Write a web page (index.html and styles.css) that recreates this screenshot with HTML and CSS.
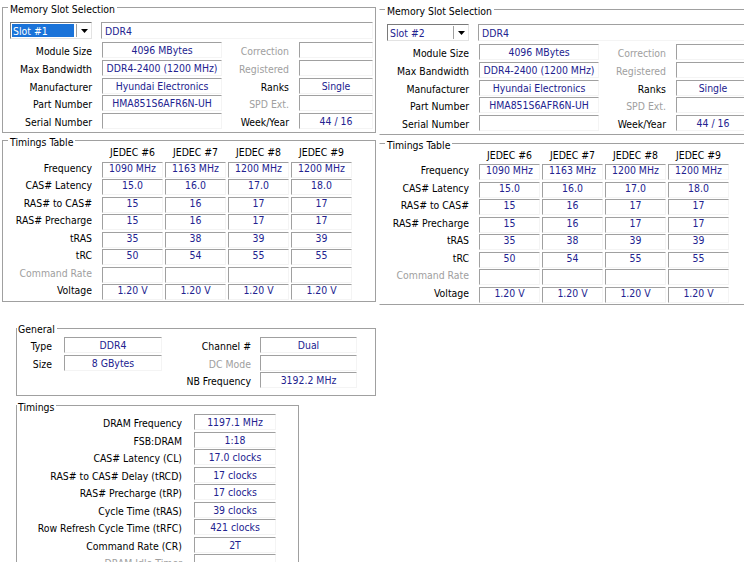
FILE: index.html
```html
<!DOCTYPE html>
<html lang="en">
<head>
    <meta charset="UTF-8">
    <title>CPU-Z SPD / Memory</title>
    <link rel="stylesheet" href="styles.css">
</head>
<body>
    <div class="top">
        <!-- SPD tab, slot 1 -->
        <div class="spd">
            <fieldset class="group">
                <legend>Memory Slot Selection</legend>
                <div class="slot-body">
                    <div class="slot-row">
                        <div class="combo active">
                            <span class="combo-text">Slot #1</span>
                            <span class="combo-btn"><svg width="7" height="4" viewBox="0 0 7 4"><polygon points="0,0 7,0 3.5,4" fill="#000"/></svg></span>
                        </div>
                        <div class="field type-field">DDR4</div>
                    </div>
                    <div class="info-grid">
                        <span class="lbl">Module Size</span><span class="field">4096 MBytes</span><span class="lbl off">Correction</span><span class="field"></span>
                        <span class="lbl">Max Bandwidth</span><span class="field">DDR4-2400 (1200 MHz)</span><span class="lbl off">Registered</span><span class="field"></span>
                        <span class="lbl">Manufacturer</span><span class="field">Hyundai Electronics</span><span class="lbl">Ranks</span><span class="field">Single</span>
                        <span class="lbl">Part Number</span><span class="field">HMA851S6AFR6N-UH</span><span class="lbl off">SPD Ext.</span><span class="field"></span>
                        <span class="lbl">Serial Number</span><span class="field"></span><span class="lbl">Week/Year</span><span class="field">44 / 16</span>
                    </div>
                </div>
            </fieldset>
            <fieldset class="group timings-table">
                <legend>Timings Table</legend>
                <div class="tt-body">
                    <div class="tt-grid">
                        <span></span><span class="col-head">JEDEC #6</span><span class="col-head">JEDEC #7</span><span class="col-head">JEDEC #8</span><span class="col-head">JEDEC #9</span>
                        <span class="lbl">Frequency</span><span class="field">1090 MHz</span><span class="field">1163 MHz</span><span class="field">1200 MHz</span><span class="field">1200 MHz</span>
                        <span class="lbl">CAS# Latency</span><span class="field">15.0</span><span class="field">16.0</span><span class="field">17.0</span><span class="field">18.0</span>
                        <span class="lbl">RAS# to CAS#</span><span class="field">15</span><span class="field">16</span><span class="field">17</span><span class="field">17</span>
                        <span class="lbl">RAS# Precharge</span><span class="field">15</span><span class="field">16</span><span class="field">17</span><span class="field">17</span>
                        <span class="lbl">tRAS</span><span class="field">35</span><span class="field">38</span><span class="field">39</span><span class="field">39</span>
                        <span class="lbl">tRC</span><span class="field">50</span><span class="field">54</span><span class="field">55</span><span class="field">55</span>
                        <span class="lbl off">Command Rate</span><span class="field"></span><span class="field"></span><span class="field"></span><span class="field"></span>
                        <span class="lbl">Voltage</span><span class="field">1.20 V</span><span class="field">1.20 V</span><span class="field">1.20 V</span><span class="field">1.20 V</span>
                    </div>
                </div>
            </fieldset>
        </div>

        <!-- SPD tab, slot 2 -->
        <div class="spd spd-second">
            <fieldset class="group">
                <legend>Memory Slot Selection</legend>
                <div class="slot-body">
                    <div class="slot-row">
                        <div class="combo">
                            <span class="combo-text">Slot #2</span>
                            <span class="combo-btn"><svg width="7" height="4" viewBox="0 0 7 4"><polygon points="0,0 7,0 3.5,4" fill="#000"/></svg></span>
                        </div>
                        <div class="field type-field">DDR4</div>
                    </div>
                    <div class="info-grid">
                        <span class="lbl">Module Size</span><span class="field">4096 MBytes</span><span class="lbl off">Correction</span><span class="field"></span>
                        <span class="lbl">Max Bandwidth</span><span class="field">DDR4-2400 (1200 MHz)</span><span class="lbl off">Registered</span><span class="field"></span>
                        <span class="lbl">Manufacturer</span><span class="field">Hyundai Electronics</span><span class="lbl">Ranks</span><span class="field">Single</span>
                        <span class="lbl">Part Number</span><span class="field">HMA851S6AFR6N-UH</span><span class="lbl off">SPD Ext.</span><span class="field"></span>
                        <span class="lbl">Serial Number</span><span class="field"></span><span class="lbl">Week/Year</span><span class="field">44 / 16</span>
                    </div>
                </div>
            </fieldset>
            <fieldset class="group timings-table">
                <legend>Timings Table</legend>
                <div class="tt-body">
                    <div class="tt-grid">
                        <span></span><span class="col-head">JEDEC #6</span><span class="col-head">JEDEC #7</span><span class="col-head">JEDEC #8</span><span class="col-head">JEDEC #9</span>
                        <span class="lbl">Frequency</span><span class="field">1090 MHz</span><span class="field">1163 MHz</span><span class="field">1200 MHz</span><span class="field">1200 MHz</span>
                        <span class="lbl">CAS# Latency</span><span class="field">15.0</span><span class="field">16.0</span><span class="field">17.0</span><span class="field">18.0</span>
                        <span class="lbl">RAS# to CAS#</span><span class="field">15</span><span class="field">16</span><span class="field">17</span><span class="field">17</span>
                        <span class="lbl">RAS# Precharge</span><span class="field">15</span><span class="field">16</span><span class="field">17</span><span class="field">17</span>
                        <span class="lbl">tRAS</span><span class="field">35</span><span class="field">38</span><span class="field">39</span><span class="field">39</span>
                        <span class="lbl">tRC</span><span class="field">50</span><span class="field">54</span><span class="field">55</span><span class="field">55</span>
                        <span class="lbl off">Command Rate</span><span class="field"></span><span class="field"></span><span class="field"></span><span class="field"></span>
                        <span class="lbl">Voltage</span><span class="field">1.20 V</span><span class="field">1.20 V</span><span class="field">1.20 V</span><span class="field">1.20 V</span>
                    </div>
                </div>
            </fieldset>
        </div>
    </div>

    <!-- Memory tab -->
    <div class="memory">
        <div class="general-clip">
            <fieldset class="group general">
                <legend>General</legend>
                <div class="general-grid">
                    <span class="lbl">Type</span><span class="field">DDR4</span><span class="lbl">Channel #</span><span class="field">Dual</span>
                    <span class="lbl">Size</span><span class="field">8 GBytes</span><span class="lbl off">DC Mode</span><span class="field"></span>
                    <span></span><span></span><span class="lbl">NB Frequency</span><span class="field">3192.2 MHz</span>
                </div>
            </fieldset>
        </div>
        <fieldset class="group timings">
            <legend>Timings</legend>
            <div class="timings-grid">
                <span class="lbl">DRAM Frequency</span><span class="field">1197.1 MHz</span>
                <span class="lbl">FSB:DRAM</span><span class="field">1:18</span>
                <span class="lbl">CAS# Latency (CL)</span><span class="field">17.0 clocks</span>
                <span class="lbl">RAS# to CAS# Delay (tRCD)</span><span class="field">17 clocks</span>
                <span class="lbl">RAS# Precharge (tRP)</span><span class="field">17 clocks</span>
                <span class="lbl">Cycle Time (tRAS)</span><span class="field">39 clocks</span>
                <span class="lbl">Row Refresh Cycle Time (tRFC)</span><span class="field">421 clocks</span>
                <span class="lbl">Command Rate (CR)</span><span class="field">2T</span>
                <span class="lbl off">DRAM Idle Timer</span><span class="field"></span>
            </div>
        </fieldset>
    </div>
</body>
</html>
```

FILE: styles.css
```css
* {
    box-sizing: border-box;
}

html, body {
    margin: 0;
}

body {
    width: 744px;
    height: 562px;
    overflow: hidden;
    background: #fff;
    color: #000;
    font-family: "DejaVu Sans Condensed", "Liberation Sans", sans-serif;
    font-size: 10.4px;
}

/* group boxes */
.group {
    margin: 0;
    padding: 0;
    min-width: 0;
    border: 1px solid #a0a0a0;
}

.group legend {
    margin-left: 5px;
    padding: 3px 2px 0;
    line-height: 10px;
}

/* common controls */
.lbl {
    text-align: right;
    white-space: nowrap;
    line-height: 16px;
    padding-top: 1px;
}

.lbl.off {
    color: #a0a0a0;
}

.field {
    height: 16px;
    border: 1px solid;
    border-color: #a0a0a0 #f4f4f4 #f4f4f4 #a0a0a0;
    color: #22228f;
    text-align: center;
    line-height: 14px;
    white-space: nowrap;
    overflow: hidden;
}

/* top row: two SPD panels */
.top {
    display: flex;
    align-items: flex-start;
    height: 325px;
}

.spd {
    flex: none;
    width: 377px;
    padding: 1px 0 0 2px;
}

.spd > .group {
    width: 374px;
}

.spd-second {
    padding-top: 3px;
}

.spd-second > .group {
    border-left-color: transparent;
}

.spd-second > .timings-table {
    margin-top: 1.5px;
}

.slot-body {
    padding: 8px 0 3px 7px;
}

.slot-row {
    display: flex;
    gap: 9px;
    height: 17px;
    margin-bottom: 3px;
}

.combo {
    display: flex;
    width: 82px;
    height: 17px;
    padding: 1px 0 1px 1px;
    border: 1px solid;
    border-color: #7a7a7a #e3e3e3 #e3e3e3 #7a7a7a;
    background: #fff;
}

.combo-text {
    width: 62px;
    padding-left: 1px;
    line-height: 14px;
    color: #22228f;
}

.combo.active .combo-text {
    background: #1a73d9;
    color: #fff;
}

.combo-btn {
    display: flex;
    align-items: center;
    justify-content: center;
    width: 15px;
    margin-left: 2px;
    border-left: 1px solid #a0a0a0;
}

.type-field {
    width: 272px;
    height: 17px;
    text-align: left;
    padding-left: 3px;
    line-height: 17px;
}

.info-grid {
    display: grid;
    grid-template-columns: 82px 120px 57px 74px;
    grid-auto-rows: 16px;
    column-gap: 10px;
    row-gap: 1.75px;
}

/* timings table: text sits high in its cells */
.timings-table {
    margin-top: 1px;
}

.tt-body {
    margin-top: -1px;
    padding: 0 0 1px 7px;
}

.tt-grid {
    display: grid;
    grid-template-columns: 90px repeat(4, 61px);
    grid-template-rows: 14px;
    grid-auto-rows: 16px;
    column-gap: 2px;
    row-gap: 1.5px;
}

.tt-grid .lbl {
    padding-right: 8px;
    line-height: 11px;
}

.tt-grid .field {
    line-height: 10px;
}

.col-head {
    text-align: center;
    line-height: 13px;
}

/* memory tab */
.memory {
    margin-left: 16px;
}

.memory .group legend {
    margin-left: 0;
    padding: 3px 2px 0 1px;
}

.general-clip {
    overflow: hidden;
    width: 360px;
}

.general {
    width: 360px;
    margin-top: -3.2px;
}

/* the screenshot crops the top of this caption */
.memory .general legend {
    padding-top: 1px;
    line-height: 12px;
}

.general-grid {
    display: grid;
    grid-template-columns: 47px 98px 98px 97px;
    grid-auto-rows: 16px;
    row-gap: 1.5px;
    padding: 2.5px 0 7px;
}

.general-grid .lbl:nth-child(4n+1) {
    padding-right: 12px;
}

.general-grid .lbl:nth-child(4n+3) {
    padding-right: 9px;
}

.timings {
    width: 283px;
    margin-top: 2.2px;
}

.timings-grid {
    display: grid;
    grid-template-columns: 177px 82px;
    grid-auto-rows: 16px;
    row-gap: 1.5px;
    padding: 2.8px 0 4px;
}

.timings-grid .lbl {
    padding-right: 12px;
}
```
